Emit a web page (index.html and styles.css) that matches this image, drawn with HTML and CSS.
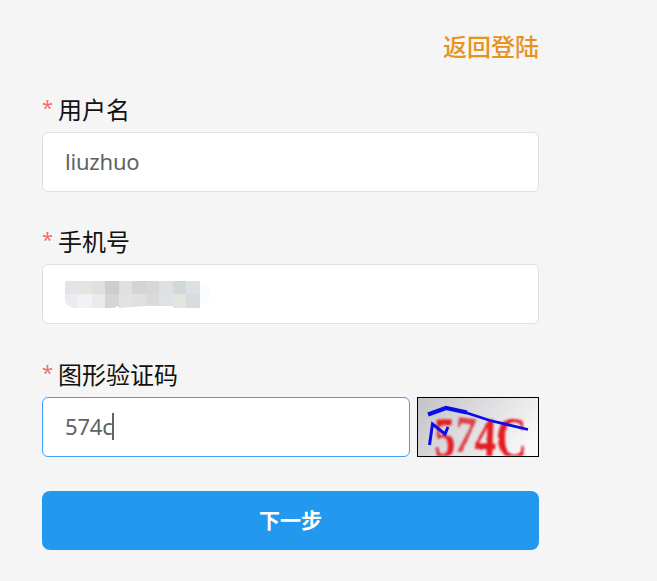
FILE: index.html
```html
<!DOCTYPE html>
<html lang="zh-CN">
<head>
<meta charset="utf-8">
<title>账号验证</title>
<link rel="stylesheet" href="styles.css">
</head>
<body>
<main class="form">
  <div class="top"><a class="back">返回登陆</a></div>
  <section class="item">
    <div class="label"><span class="star">*</span>用户名</div>
    <div class="field"><span class="value">liuzhuo</span></div>
  </section>
  <section class="item">
    <div class="label"><span class="star">*</span>手机号</div>
    <div class="field">
      <svg class="mosaic" width="150" height="28" viewBox="0 0 150 28">
        <path fill="#e4e4e8" d="M0 2q0-2 2-2h11v13H0z"/>
        <path fill="#e5e4e2" d="M13 0h14v13H13z"/>
        <path fill="#e1e0de" d="M27 0h13v13H27z"/>
        <path fill="#cdcdcf" d="M40 0h14v13H40z"/>
        <path fill="#e1e0de" d="M54 0h13v13H54z"/>
        <path fill="#d6d3d5" d="M67 0h14v13H67z"/>
        <path fill="#d5d8d7" d="M81 0h13v13H81z"/>
        <path fill="#dee1e0" d="M94 0h14v13H94z"/>
        <path fill="#d2d7d8" d="M108 0h13v13h-13z"/>
        <path fill="#dae0e4" d="M121 0h14v13h-14z"/>
        <path fill="#ececee" d="M0 13h13v14H9q-9-2-9-8z"/>
        <path fill="#f0f2f5" d="M13 13h14v14H13z"/>
        <path fill="#eaeaec" d="M27 13h13v14H27z"/>
        <path fill="#d5d5d8" d="M40 13h14v13l-3-1-1 2H40z"/>
        <path fill="#e2e2e4" d="M54 13h13v13l-13 1z"/>
        <path fill="#e0e0e0" d="M67 13h14v12l-14 1z"/>
        <path fill="#dadada" d="M81 13h13v12H81z"/>
        <path fill="#dfe1e5" d="M94 13h14v12H94z"/>
        <path fill="#e4e4e1" d="M108 13h13v14h-13z"/>
        <path fill="#d7dcdd" d="M121 13h14v14h-14z"/>
        <path fill="#fafdff" d="M135 4q11 0 11 9t-11 12z"/>
      </svg>
    </div>
  </section>
  <section class="item">
    <div class="label"><span class="star">*</span>图形验证码</div>
    <div class="row">
      <div class="field focus"><span class="value">574c</span><span class="caret"></span></div>
      <svg class="captcha" width="122" height="60" viewBox="0 0 122 60">
        <defs>
          <linearGradient id="shade" x1="0" y1="0.2" x2="1" y2="0.6">
            <stop offset="0" stop-color="#c5c5c8"/>
            <stop offset="0.5" stop-color="#dfdfe1"/>
            <stop offset="1" stop-color="#f8f8f8"/>
          </linearGradient>
          <filter id="rough" filterUnits="userSpaceOnUse" x="1" y="1" width="120" height="58">
            <feTurbulence type="fractalNoise" baseFrequency="0.3" numOctaves="2" seed="4"/>
            <feDisplacementMap in="SourceGraphic" scale="2.5" xChannelSelector="R" yChannelSelector="G"/>
            <feGaussianBlur stdDeviation="0.8"/>
          </filter>
        </defs>
        <rect width="122" height="60" fill="url(#shade)"/>
        <g class="code" filter="url(#rough)">
          <text transform="translate(18 59.500) rotate(-2) scale(.74 1)">5</text>
          <text class="soft" transform="translate(36 54) rotate(6) scale(.74 .93)">7</text>
          <text transform="translate(57 59) rotate(2) scale(.78 1)">4</text>
          <text transform="translate(79 59.500) scale(.76 1)">C</text>
        </g>
        <g fill="none" stroke="#0b0bec">
          <path stroke-width="4.2" d="M11 17.500 29 11l21 4.500"/>
          <path stroke-width="2.800" d="M47 15 73 23.500 111 32.500"/>
          <path stroke-width="3" d="M12.500 48 15.500 27 28 37l3-7"/>
        </g>
        <rect x=".5" y=".5" width="121" height="59" fill="none" stroke="#000"/>
      </svg>
    </div>
  </section>
  <div class="submit">下一步</div>
</main>
</body>
</html>
```
FILE: styles.css
```css
* { box-sizing: border-box; }
body {
  margin: 0;
  background: #f5f5f5;
  font-family: "Noto Sans", "Noto Sans CJK SC", sans-serif;
  color: #111;
}
.form { width: 497px; margin-left: 42px; padding-top: 28px; }
.top { height: 63px; text-align: right; line-height: 36px; font-size: 24px; }
.back { color: #e8921c; font-family: "Noto Sans CJK SC", sans-serif; font-weight: 500; }
.item { height: 132.4px; }
.label {
  display: flex;
  height: 41px;
  line-height: 36px;
  font-size: 24px;
  font-family: "Noto Sans CJK SC", sans-serif;
  font-weight: 400;
}
.star { width: 16px; color: #f56c6c; font-family: "Noto Sans", sans-serif; font-size: 20px; line-height: 34px; }
.field {
  display: flex;
  align-items: center;
  height: 60px;
  padding-left: 22px;
  background: #fff;
  border: 1px solid #dcdfe6;
  border-radius: 6px;
}
.value { padding-bottom: 2px; font-size: 22px; line-height: 32px; letter-spacing: -.2px; color: #606266; }
.mosaic { display: block; margin-top: 2px; }
.row { display: flex; gap: 7px; }
.focus { width: 368px; border-color: #409eff; }
.caret { width: 2px; height: 27px; margin-left: -1px; background: #606266; }
.captcha { display: block; overflow: visible; }
.code { fill: #e51c22; font: bold 56px "Liberation Serif", serif; }
.soft { fill: #dc4246; }
.submit {
  height: 59px;
  margin-top: 2.8px;
  border-radius: 8px;
  background: #2398ef;
  color: #fff;
  text-align: center;
  font: bold 21px/57px "Noto Sans CJK SC", sans-serif;
}
```
